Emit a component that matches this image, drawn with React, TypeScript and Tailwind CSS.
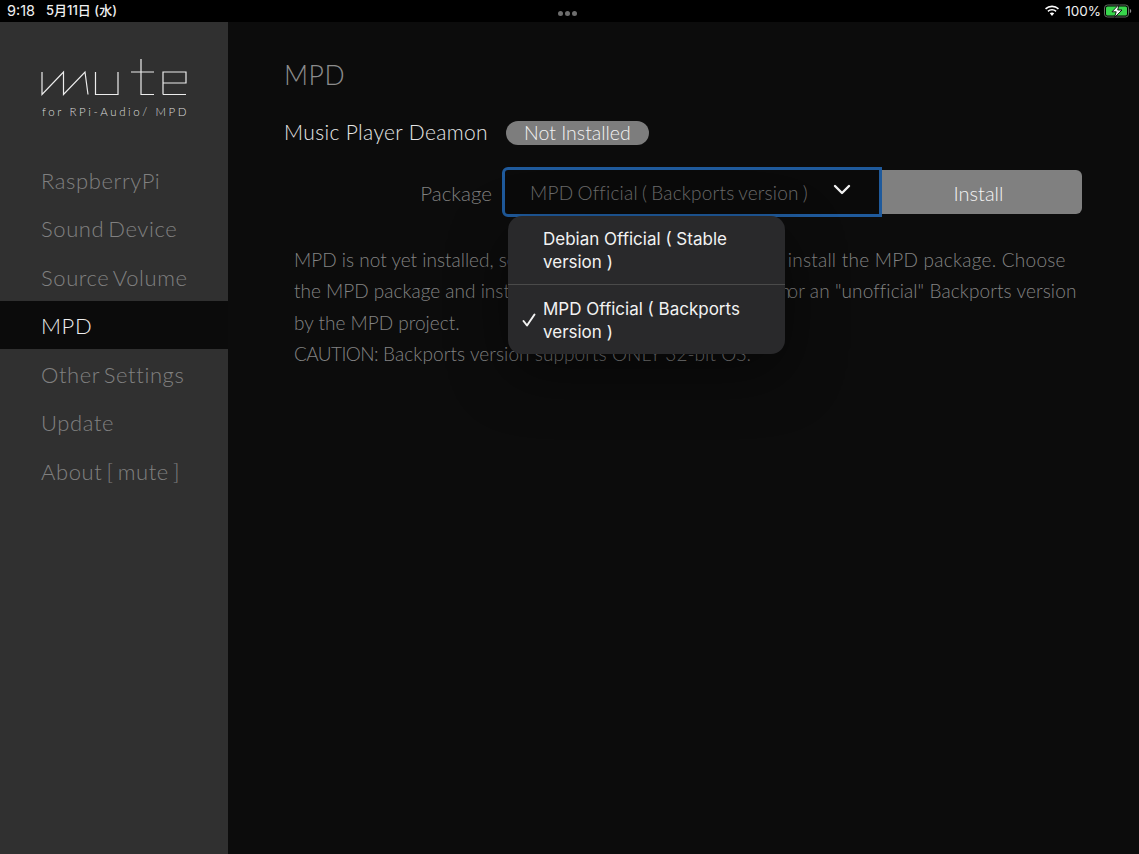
import React from "react";

const font = { fontFamily: '"Lato", "Noto Sans CJK JP", sans-serif' };
const items = ["RaspberryPi", "Sound Device", "Source Volume", "MPD", "Other Settings", "Update", "About [ mute ]"];

function Logo() {
  return (
    <svg width="150" height="38" viewBox="0 0 150 38" fill="none" stroke="#ececec" strokeWidth="1.2" className="block">
      <path d="M1 13V35.500L22.500 13V35.500L44 13L47 35.500" />
      <path d="M54.500 13V35.500H77V13" />
      <path d="M100 0V35.500H113M90 13H113" />
      <path d="M122 35.500V13H145V24H122M122 35.500H145" />
    </svg>
  );
}

function Wifi() {
  return (
    <svg width="16" height="12" viewBox="0 0 16 12" fill="white" className="mr-[2px]">
      <path d="M8 2.200c2.300 0 4.300.9 5.900 2.300l1.100-1.200A10.400 10.400 0 0 0 8 .5 10.400 10.400 0 0 0 1 3.300l1.100 1.200A8.800 8.800 0 0 1 8 2.200z" />
      <path d="M8 5.600c1.300 0 2.500.5 3.500 1.300l1.100-1.200A7 7 0 0 0 8 3.900a7 7 0 0 0-4.600 1.800l1.100 1.200c1-.8 2.200-1.300 3.500-1.300z" />
      <path d="M8 7.400c-.9 0-1.600.3-2.200.8L8 11l2.200-2.800c-.6-.5-1.300-.8-2.200-.8z" />
    </svg>
  );
}

function Battery() {
  return (
    <svg width="28" height="14" viewBox="0 0 28 14" fill="none">
      <rect x="0.500" y="1" width="24" height="12" rx="3" stroke="#5f6f5f" />
      <rect x="2" y="2.500" width="21" height="9" rx="1.500" fill="#38d64c" />
      <path d="M25.800 5c1 .3 1.400 1 1.400 2s-.4 1.700-1.400 2z" fill="#8a8a8a" />
      <path d="M15 0.500L8 7.800h4.200L10.500 13.500L18 6h-4.300z" fill="white" stroke="#0a0a0a" strokeWidth="0.9" />
    </svg>
  );
}

export default function App() {
  return (
    <div className="flex h-[854px] w-[1139px] flex-col overflow-hidden bg-[#0c0c0c]" style={font}>
      <header className="relative flex h-[22px] shrink-0 items-center justify-between bg-black pl-[7px] pr-[7px] text-[14px] text-[#f0f0f0]" style={{ fontFamily: '"Inter", "Noto Sans CJK JP", sans-serif' }}>
        <div className="flex items-center gap-[11px]">
          <span className="text-[14.500px]">9:18</span>
          <span className="text-[13px] font-medium">5月11日 (水)</span>
        </div>
        <div className="absolute left-[558px] top-[11px] flex gap-[2px]">
          <span className="h-[5px] w-[5px] rounded-full bg-[#6e6e6e]" />
          <span className="h-[5px] w-[5px] rounded-full bg-[#6e6e6e]" />
          <span className="h-[5px] w-[5px] rounded-full bg-[#6e6e6e]" />
        </div>
        <div className="flex items-center gap-[3px]">
          <Wifi />
          <span className="text-[13.500px]">100%</span>
          <Battery />
        </div>
      </header>
      <div className="flex min-h-0 flex-1">
        <aside className="w-[228px] shrink-0 bg-[#303030]">
          <div className="pl-[41px] pt-[37px]">
            <Logo />
            <div className="ml-[1px] mt-[7px] text-[11.500px] font-light leading-[16px] tracking-[2.600px] text-[#dcdcdc]">for RPi-Audio/ MPD</div>
          </div>
          <nav className="mt-[35px]">
            {items.map((t) => (
              <div
                key={t}
                className={`flex h-[48.500px] items-center pl-[41px] pt-[2px] text-[22px] font-light tracking-[0.600px] [word-spacing:-2.500px] ${
                  t === "MPD" ? "bg-[#0b0b0b] text-[#efefef]" : "text-[#808080]"
                }`}
              >
                {t}
              </div>
            ))}
          </nav>
        </aside>
        <main className="relative min-w-0 flex-1 pl-[56px]">
          <h1 className="pt-[35px] text-[26.500px] font-light leading-[36px] tracking-[0.500px] text-[#8c8c8c]">MPD</h1>
          <div className="mt-[28px] flex h-[24px] items-center gap-[18px]">
            <span className="pb-[2px] text-[21px] font-light tracking-[0.350px] text-[#e6e6e6]">Music Player Deamon</span>
            <span className="flex h-[24px] w-[143px] items-center justify-center rounded-full bg-[#7d7d7d] pb-[1px] text-[19.500px] font-light text-[#f2f2f2]">
              Not Installed
            </span>
          </div>
          <div className="mt-[22px] flex h-[50px] items-center">
            <span className="w-[218px] pr-[10px] pt-[2px] text-right text-[20.500px] font-light text-[#808080]">Package</span>
            <div className="flex h-[50px] w-[380px] items-center justify-between rounded-l-[6px] border-[3px] border-[#1f5a9c] bg-[#0a0a0a] pl-[25px] pr-[28px] text-[19px] font-light tracking-[0.200px] text-[#6c6c6c] [word-spacing:-1.200px]">
              <span className="whitespace-nowrap pt-[3px]">MPD Official ( Backports version )</span>
              <svg width="18" height="11" viewBox="0 0 18 11" fill="none" stroke="#f0f0f0" strokeWidth="2.400" strokeLinecap="round" strokeLinejoin="round" className="shrink-0 -translate-y-[3px]">
                <path d="M2 2l7 7 7-7" />
              </svg>
            </div>
            <button className="flex h-[44px] w-[200px] items-center justify-center rounded-r-[6px] bg-[#808080] pr-[7px] pt-[1px] text-[20px] font-light text-[#f4f4f4]">
              Install
            </button>
          </div>
          <p className="ml-[10px] mt-[27px] whitespace-nowrap text-[19px] font-light leading-[31.300px] text-[#838383]">
            MPD is not yet installed, so please press Install button to
            <span className="ml-[31px] tracking-[0.250px]">install the MPD package. Choose</span>
            <br />
            the MPD package and install: Debian "Official" Stable version
            <span className="ml-[-3px] tracking-[0.100px]">or an "unofficial" Backports version</span>
            <br />
            by the MPD project.
            <br />
            <span className="tracking-[-0.600px]">CAUTION:</span>{" "}
            <span className="tracking-[0.070px]">Backports version supports ONLY 32-bit OS.</span>
          </p>

          <div className="absolute left-[280px] top-[194px] w-[277px] rounded-[14px] bg-[#29292b] text-[17px] leading-[23px] text-[#f2f2f2] shadow-[0_20px_60px_rgba(0,0,0,0.45)]" style={{ fontFamily: '"Inter", sans-serif' }}>
            <div className="h-[68px] pl-[35px] pr-[40px] pt-[12px]">Debian Official ( Stable version )</div>
            <div className="h-px bg-[#4a4a4a]" />
            <div className="relative h-[69px] pl-[35px] pr-[30px] pt-[13px]">
              <svg width="14" height="14" viewBox="0 0 14 14" fill="none" stroke="#f2f2f2" strokeWidth="2" strokeLinecap="round" strokeLinejoin="round" className="absolute left-[14px] top-[28px]">
                <path d="M1.500 8l3.500 4.500L12.500 1.500" />
              </svg>
              MPD Official ( Backports version )
            </div>
          </div>
        </main>
      </div>
    </div>
  );
}
